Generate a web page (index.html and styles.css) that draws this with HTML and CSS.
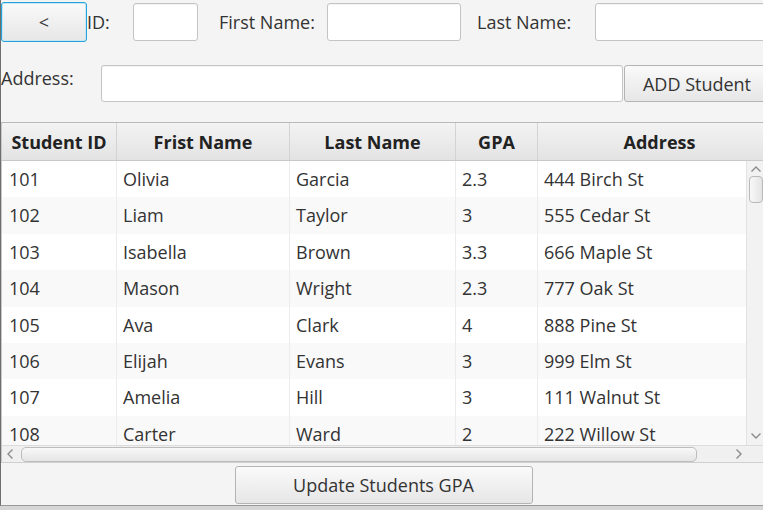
FILE: index.html
```html
<!DOCTYPE html>
<html>
<head>
<meta charset="utf-8">
<link rel="stylesheet" href="styles.css">
</head>
<body>
<div class="app">
  <div class="row1">
    <button class="btn back">&lt;</button>
    <span class="lbl lbl-id">ID:</span>
    <div class="field f-id"></div>
    <span class="lbl lbl-fn">First Name:</span>
    <div class="field f-fn"></div>
    <span class="lbl lbl-ln">Last Name:</span>
    <div class="field f-ln"></div>
  </div>
  <div class="row2">
    <span class="lbl lbl-addr">Address:</span>
    <div class="field f-addr"></div>
    <button class="btn add">ADD Student</button>
  </div>
  <div class="table">
    <div class="thead cols">
      <div class="th">Student ID</div>
      <div class="th">Frist Name</div>
      <div class="th">Last Name</div>
      <div class="th">GPA</div>
      <div class="th">Address</div>
    </div>
    <div class="tbody-wrap">
      <div class="tbody">
        <div class="tr cols"><div class="td">101</div><div class="td">Olivia</div><div class="td">Garcia</div><div class="td">2.3</div><div class="td">444 Birch St</div></div>
        <div class="tr cols"><div class="td">102</div><div class="td">Liam</div><div class="td">Taylor</div><div class="td">3</div><div class="td">555 Cedar St</div></div>
        <div class="tr cols"><div class="td">103</div><div class="td">Isabella</div><div class="td">Brown</div><div class="td">3.3</div><div class="td">666 Maple St</div></div>
        <div class="tr cols"><div class="td">104</div><div class="td">Mason</div><div class="td">Wright</div><div class="td">2.3</div><div class="td">777 Oak St</div></div>
        <div class="tr cols"><div class="td">105</div><div class="td">Ava</div><div class="td">Clark</div><div class="td">4</div><div class="td">888 Pine St</div></div>
        <div class="tr cols"><div class="td">106</div><div class="td">Elijah</div><div class="td">Evans</div><div class="td">3</div><div class="td">999 Elm St</div></div>
        <div class="tr cols"><div class="td">107</div><div class="td">Amelia</div><div class="td">Hill</div><div class="td">3</div><div class="td">111 Walnut St</div></div>
        <div class="tr cols"><div class="td">108</div><div class="td">Carter</div><div class="td">Ward</div><div class="td">2</div><div class="td">222 Willow St</div></div>
      </div>
      <div class="vscroll">
        <svg class="arrow" width="12" height="8" viewBox="0 0 12 8"><path d="M1.5 6.5 L6 2 L10.5 6.5" fill="none" stroke="#8a8a8a" stroke-width="1.4"/></svg>
        <div class="vthumb"></div>
        <div class="vspace"></div>
        <svg class="arrow" width="12" height="8" viewBox="0 0 12 8"><path d="M1.5 1.5 L6 6 L10.5 1.5" fill="none" stroke="#8a8a8a" stroke-width="1.4"/></svg>
      </div>
    </div>
    <div class="hscroll">
      <svg class="arrow" width="8" height="12" viewBox="0 0 8 12"><path d="M6.5 1.5 L2 6 L6.5 10.5" fill="none" stroke="#8a8a8a" stroke-width="1.4"/></svg>
      <div class="hthumb"></div>
      <svg class="arrow right" width="8" height="12" viewBox="0 0 8 12"><path d="M1.5 1.5 L6 6 L1.5 10.5" fill="none" stroke="#8a8a8a" stroke-width="1.4"/></svg>
      <div class="corner"></div>
    </div>
  </div>
  <div class="footer">
    <button class="btn update">Update Students GPA</button>
  </div>
</div>
</body>
</html>
```
FILE: styles.css
```css
* { box-sizing: border-box; }
html, body {
  margin: 0;
  padding: 0;
  background: #d6d6d6;
}
body {
  font-family: "Open Sans", "Noto Sans", sans-serif;
  color: #333;
  width: 763px;
  height: 510px;
  overflow: hidden;
}
.app {
  width: 763px;
  height: 506px;
  background: #f4f4f4;
  border-left: 1px solid #6e6e6e;
  border-bottom: 1px solid #9a9a9a;
  overflow: hidden;
  display: flex;
  flex-direction: column;
}
.btn {
  font-family: inherit;
  font-size: 18px;
  color: #333;
  background: linear-gradient(#fafafa, #e6e6e6);
  border: 1px solid #b4b4b4;
  border-radius: 3px;
  padding: 0;
  flex: none;
}
.field {
  background: #fff;
  border: 1px solid #c4c4c4;
  border-radius: 3px;
  box-shadow: inset 0 1px 1px rgba(0,0,0,0.05);
  flex: none;
}
.lbl {
  font-size: 18px;
  flex: none;
  white-space: nowrap;
}
.row1 {
  height: 43px;
  display: flex;
  align-items: center;
  padding-top: 1px;
}
.back {
  width: 86px;
  height: 40px;
  border: 1px solid #22a4da;
  box-shadow: inset 0 0 0 1px #c9e6f3;
}
.lbl-id { width: 46px; padding-left: 0; }
.f-id { width: 65px; height: 38px; }
.lbl-fn { width: 129px; padding-left: 21px; }
.f-fn { width: 134px; height: 38px; }
.lbl-ln { width: 134px; padding-left: 16px; }
.f-ln { width: 180px; height: 38px; }
.row2 {
  height: 79px;
  display: flex;
  align-items: flex-start;
  padding-top: 22px;
}
.lbl-addr { width: 100px; padding-left: 0; margin-top: 1px; }
.f-addr { width: 522px; height: 37px; }
.add { width: 146px; height: 37px; margin-left: 1px; }

.table {
  border-top: 1px solid #b9b9b9;
  border-left: 1px solid #c8c8c8;
  width: 762px;
  display: flex;
  flex-direction: column;
  overflow: hidden;
}
.cols {
  display: grid;
  grid-template-columns: 115px 173px 166px 82px 244px;
}
.thead {
  height: 38px;
  background: linear-gradient(#f3f3f3, #e3e3e3);
  border-bottom: 1px solid #c9c9c9;
}
.th {
  font-weight: 700;
  font-size: 18px;
  color: #222;
  text-align: center;
  line-height: 35px;
  padding-top: 2px;
  border-right: 1px solid #d3d3d3;
  white-space: nowrap;
}
.tbody-wrap {
  height: 284px;
  display: flex;
  overflow: hidden;
}
.tbody {
  width: 744px;
  overflow: hidden;
  flex: none;
}
.tr {
  height: 36.4px;
  background: #fff;
}
.tr:nth-child(even) { background: #f9f9f9; }
.td {
  font-size: 18px;
  line-height: 36px;
  padding-left: 6px;
  border-right: 1px solid #ececec;
  white-space: nowrap;
  color: #333;
}
.td:first-child { padding-left: 7px; }
.vscroll {
  width: 18px;
  flex: none;
  background: #f2f2f2;
  border-left: 1px solid #e2e2e2;
  display: flex;
  flex-direction: column;
  align-items: center;
  padding: 4px 0 5px;
}
.vthumb {
  width: 14px;
  height: 27px;
  margin-top: 3px;
  border: 1px solid #b9b9b9;
  border-radius: 4px;
  background: linear-gradient(90deg, #f8f8f8, #e4e4e4);
}
.vspace { flex: 1; }
.hscroll {
  height: 18px;
  background: #f0f0f0;
  border-top: 1px solid #dcdcdc;
  border-bottom: 1px solid #cfcfcf;
  display: flex;
  align-items: center;
  padding-left: 4px;
}
.hthumb {
  width: 676px;
  height: 15px;
  margin-left: 7px;
  border: 1px solid #bdbdbd;
  border-radius: 5px;
  background: linear-gradient(#f8f8f8, #e5e5e5);
}
.hscroll .right { margin-left: 38px; }
.corner { flex: 1; }
.footer {
  flex: 1;
  display: flex;
  justify-content: center;
  align-items: flex-start;
  padding-top: 3px;
  padding-left: 3px;
}
.update {
  width: 298px;
  height: 38px;
}
```
